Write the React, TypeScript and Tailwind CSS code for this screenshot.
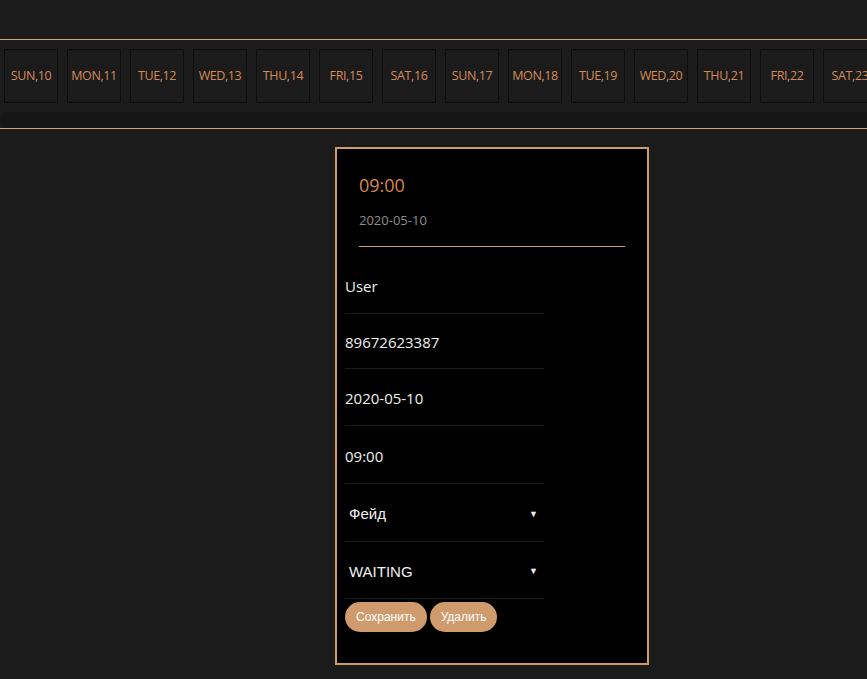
const days = [
  "SUN,10",
  "MON,11",
  "TUE,12",
  "WED,13",
  "THU,14",
  "FRI,15",
  "SAT,16",
  "SUN,17",
  "MON,18",
  "TUE,19",
  "WED,20",
  "THU,21",
  "FRI,22",
  "SAT,23",
  "SUN,24",
];

const fields = [
  { value: "User", h: "h-[57px]" },
  { value: "89672623387", h: "h-[55px]" },
  { value: "2020-05-10", h: "h-[57px]" },
  { value: "09:00", h: "h-[58px]" },
];

const selects = [
  { value: "Фейд", h: "h-[58px]" },
  { value: "WAITING", h: "h-[57px]" },
];

const App = () => {
  return (
    <div className="min-h-screen w-full bg-[#1b1b1b] font-['Open_Sans',sans-serif] overflow-hidden">
      {/* Header spacer */}
      <div className="h-[39px]" />

      {/* Day tabs */}
      <div className="border-t border-b border-[#d3a272]">
        <div className="flex gap-[9px] pl-[4px] pt-[9px] overflow-hidden">
          {days.map((d) => (
            <div
              key={d}
              className="shrink-0 w-[54px] h-[54px] flex items-center justify-center border border-[#0e0e0e] text-[12.5px] tracking-[-0.4px] text-[#d58b58] whitespace-nowrap"
            >
              {d}
            </div>
          ))}
        </div>
        {/* scroll track */}
        <div className="mt-[9px] h-[16px] rounded-l-full bg-[#161616]" />
      </div>

      {/* Card */}
      <div className="pl-[335px] pt-[18px]">
        <div className="w-[314px] h-[518px] border-2 border-[#cf9b6c] bg-black">
          <div className="px-[22px] pt-[24px]">
            <div className="text-[18px] leading-[24px] text-[#d9884c]">09:00</div>
            <div className="mt-[14px] text-[13px] leading-[18px] text-[#8e8e8e]">2020-05-10</div>
            <div className="mt-[17px] border-b border-[#cf9b6c]" />
          </div>

          <div className="ml-[8px] w-[199px] mt-[10px]">
            {fields.map((f) => (
              <div
                key={f.value}
                className={`${f.h} flex items-center pt-[3px] border-b border-[#1c1c1c] text-[15px] text-[#f0f0f0]`}
              >
                {f.value}
              </div>
            ))}
            {selects.map((s) => (
              <div
                key={s.value}
                className={`${s.h} flex items-center justify-between pt-[4px] pl-[4px] pr-[6px] border-b border-[#1c1c1c] font-['Liberation_Sans',sans-serif] text-[15px] text-[#f0f0f0]`}
              >
                <span>{s.value}</span>
                <span className="text-[9px]">▼</span>
              </div>
            ))}
            <div className="flex gap-[3px] mt-[3px] font-['Liberation_Sans',sans-serif]">
              <button className="h-[30px] px-[11px] rounded-full bg-[#cf9b6c] text-white text-[12px]">
                Сохранить
              </button>
              <button className="h-[30px] px-[11px] rounded-full bg-[#cf9b6c] text-white text-[12px]">
                Удалить
              </button>
            </div>
          </div>
        </div>
      </div>
    </div>
  );
};

export default App;
